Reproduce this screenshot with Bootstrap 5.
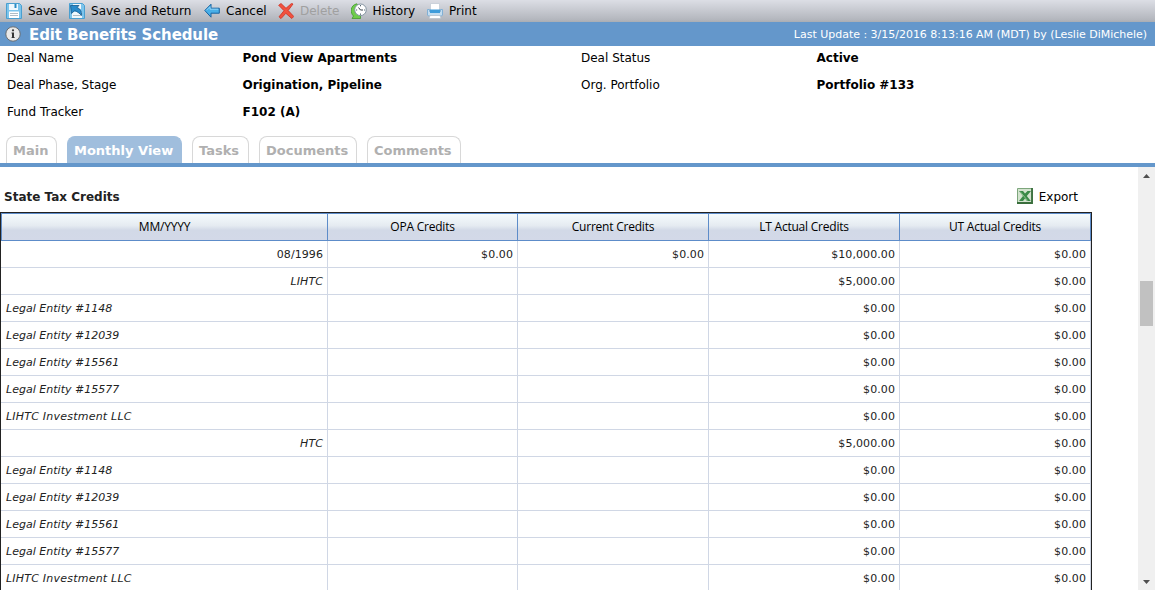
<!DOCTYPE html>
<html lang="en">
<head>
<meta charset="utf-8">
<title>Edit Benefits Schedule</title>
<link href="https://cdn.jsdelivr.net/npm/bootstrap@5.3.0/dist/css/bootstrap.min.css" rel="stylesheet">
<style>
body{font-family:Verdana,"DejaVu Sans",sans-serif;font-size:12px;line-height:16px;color:#000;height:590px;background:#fff}
.toolbar{height:22px;background:linear-gradient(#dcdee5,#b4b7be 88%,#a9adb3);padding-left:6px}
.tool{color:#000;font-size:12px;line-height:20px;height:21px;white-space:nowrap}
.tool svg{flex:none;margin-right:6px}
.tool.off{color:#a0a0a0}
.titlebar{height:24px;background:#6497cb;color:#fff;padding:0 8px 0 5px}
.titlebar h1{font-size:15px;line-height:24px;font-weight:700;margin:1px 0 0 8px;letter-spacing:-.1px}
.stamp{font-size:11px;letter-spacing:-.015px;padding-top:1px}
.facts{height:90px;padding-left:7px}
.facts>div{height:27px;line-height:24px;display:grid;grid-template-columns:235.5px 338.5px 235.5px 1fr}
.tabs{height:31px;border-bottom:4px solid #6497cb;padding-left:6px;gap:10px}
.tabs .tab{height:27px;border:1px solid #d8d8d8;border-bottom:0;border-radius:8px 8px 0 0;color:#b0b0b0;font-weight:700;font-size:13px;line-height:27px;padding-left:6px;text-decoration:none;white-space:nowrap}
.tabs .tab.active{background:#a0bedd;border-color:#a0bedd;color:#fff}
.pane{height:423px}
.sect{height:45px;padding:14px 60px 0 4px;width:1138px}
.grid{width:1092px;border:1px solid #222;border-bottom:0;table-layout:fixed;border-collapse:separate;border-spacing:0;color:#222;font-size:11px}
.grid th{height:28px;padding:0;text-align:center;font:12px/26px "Trebuchet MS","Open Sans",sans-serif;letter-spacing:-.22px;color:#000;background:linear-gradient(#f5fbfd,#e5ebf1 45%,#d2d9e7 62%,#d3d9e8);border:1px solid #5d8cc9;border-width:1px 1px 1px 0}
.grid th:first-child{border-left-width:1px}
.grid td{height:27px;padding:1px 4px 0;line-height:25px;letter-spacing:.08px;text-align:right;border:1px solid #d0d7e5;border-width:0 1px 1px 0}
.grid tr.sub td:first-child,.grid tr.leaf td:first-child{font-style:italic}
.grid tr.leaf td:first-child{text-align:left;padding-left:5px;letter-spacing:.02px}
.grid tr.wide td:first-child{letter-spacing:.22px}
.bar{width:17px;background:#f0f0f0;padding:6px 2px 3px}
.thumb{height:45px;margin-top:102px;background:#c1c1c1}
</style>
</head>
<body class="d-flex flex-column overflow-hidden">
<nav class="toolbar d-flex flex-shrink-0">
<a class="tool d-flex align-items-center text-decoration-none" style="width:63px"><svg width="16" height="16" viewBox="0 0 16 16"><path d="M.5.5h13l2 2v13H.5z" fill="#7cc4ec" stroke="#4a9fd0"/><path d="M3 1h9v6H3z" fill="#f0f8fd"/><path d="M8.500 1h2v4h-2z" fill="#288bc4"/><path d="M3 8.500h10V15H3z" fill="#fff"/><path d="M4 10.500h8M4 12.500h8" stroke="#b0bcc5"/></svg>Save</a>
<a class="tool d-flex align-items-center text-decoration-none" style="width:135px;letter-spacing:.06px"><svg width="16" height="16" viewBox="0 0 16 16"><path d="M.5.5h13l2 2v13H.5z" fill="#7cc4ec" stroke="#4a9fd0"/><path d="M4 1h8v5H4zM3 9h10v6H3z" fill="#f1f8fc"/><path d="M4 12.500h8" stroke="#b0bcc5"/><path d="M1.500 2.500H10L8 4.500c3 1 5 4 4.500 8C10.500 10 8.500 9 5.800 7.500L2.500 10.500z" fill="#2a8bcb" stroke="#17588c" stroke-width=".8"/></svg>Save and Return</a>
<a class="tool d-flex align-items-center text-decoration-none" style="width:74px"><svg width="16" height="16" viewBox="0 0 16 16"><path d="M.8 7.500 7 1.200v4h8.300v5H7v4z" fill="#48afe8" stroke="#1762a0"/><path d="M2.500 7.200 6 3.700v2.500h8.300" fill="none" stroke="#91d4f8"/></svg>Cancel</a>
<a class="tool off d-flex align-items-center text-decoration-none" style="width:72.500px"><svg width="16" height="16" viewBox="0 0 16 16"><path d="M.7 2.300 3 .5l5 4.800L13.500.4l1.500.6-4.800 6.500 5.600 6-2 2-6-5.200L3 15.600l-2-1.800L6 7.700z" fill="#f1523f" stroke="#cf2d20" stroke-width=".8"/></svg>Delete</a>
<a class="tool d-flex align-items-center text-decoration-none" style="width:76.500px"><svg width="16" height="16" viewBox="0 0 16 16"><path d="M6 .8C-1 2-1 10 2.500 13L1 15.500h8.500V9L7 11C5 9 5 5 8 3z" fill="#6fcd4c" stroke="#389324" stroke-width=".7"/><circle cx="9.500" cy="6.800" r="5.800" fill="#fff" stroke="#8494a2"/><path d="M7.500 4.500l2 2.500H12" stroke="#39434c" fill="none"/><path d="M9.500 2v1.300M9.500 10.500v1.300M5 7h1.200M13 7h1.200" stroke="#556573"/></svg>History</a>
<a class="tool d-flex align-items-center text-decoration-none"><svg width="16" height="16" viewBox="0 0 16 16"><path d="M3.500.5h9V8h-9z" fill="#fff" stroke="#c3ccd5" stroke-width=".8"/><path d="M.5 6.500h2v2h11v-2h2V12l-1 1h-13l-1-1z" fill="#c3ddf0" stroke="#79acd4" stroke-width=".9"/><path d="M3 6.500h10V10H3z" fill="#3e9cda"/><path d="M3 12.500h10l1 3H2z" fill="#fff" stroke="#b5bfc9" stroke-width=".7"/></svg>Print</a>
</nav>
<header class="titlebar d-flex align-items-center justify-content-between flex-shrink-0">
<div class="d-flex align-items-center"><svg width="16" height="16" viewBox="0 0 16 16"><circle cx="8" cy="8" r="7.200" fill="#e8e8e8" stroke="#666" stroke-width=".9"/><path d="M6.500 6.500H9V12H7V7.500h-.5zM6.500 11.200h3.300v.8H6.500z" fill="#333"/><circle cx="8" cy="4.300" r="1.100" fill="#333"/></svg><h1>Edit Benefits Schedule</h1></div>
<span class="stamp">Last Update : 3/15/2016 8:13:16 AM (MDT) by (Leslie DiMichele)</span>
</header>
<section class="facts flex-shrink-0">
<div><span>Deal Name</span><b>Pond View Apartments</b><span>Deal Status</span><b>Active</b></div>
<div><span>Deal Phase, Stage</span><b>Origination, Pipeline</b><span>Org. Portfolio</span><b>Portfolio #133</b></div>
<div><span>Fund Tracker</span><b>F102 (A)</b></div>
</section>
<nav class="tabs d-flex flex-shrink-0">
<a class="tab" style="width:51px">Main</a><a class="tab active" style="width:115px">Monthly View</a><a class="tab" style="width:57px">Tasks</a><a class="tab" style="width:98px">Documents</a><a class="tab" style="width:94px">Comments</a>
</nav>
<main class="pane d-flex overflow-hidden">
<div class="flex-grow-1">
<div class="sect d-flex justify-content-between align-items-center"><b style="color:#222;padding-top:1px">State Tax Credits</b><span class="d-flex align-items-center"><svg width="16" height="16" viewBox="0 0 16 16" style="margin:-1px 6px 0 0"><path d="M.5.5h15v15H.5z" fill="#d3e3cf" stroke="#7da67c"/><path d="M15 0v15H0" fill="none" stroke="#396e3c" stroke-width="1.800"/><path d="M2 3h4l2 2.500L10.500 3H14L9.800 8l4 5H10L8 10.500 6 13H2l4-5z" fill="#3a8a48"/><path d="M3 3.500l7.500 9" stroke="#8cc18e"/></svg>Export</span></div>
<table class="grid">
<colgroup><col style="width:327px"><col style="width:190px"><col style="width:191px"><col style="width:191px"><col style="width:191px"></colgroup>
<thead><tr><th>MM/YYYY</th><th>OPA Credits</th><th>Current Credits</th><th>LT Actual Credits</th><th>UT Actual Credits</th></tr></thead>
<tbody>
<tr><td>08/1996</td><td>$0.00</td><td>$0.00</td><td>$10,000.00</td><td>$0.00</td></tr>
<tr class="sub"><td>LIHTC</td><td></td><td></td><td>$5,000.00</td><td>$0.00</td></tr>
<tr class="leaf"><td>Legal Entity #1148</td><td></td><td></td><td>$0.00</td><td>$0.00</td></tr>
<tr class="leaf"><td>Legal Entity #12039</td><td></td><td></td><td>$0.00</td><td>$0.00</td></tr>
<tr class="leaf"><td>Legal Entity #15561</td><td></td><td></td><td>$0.00</td><td>$0.00</td></tr>
<tr class="leaf"><td>Legal Entity #15577</td><td></td><td></td><td>$0.00</td><td>$0.00</td></tr>
<tr class="leaf wide"><td>LIHTC Investment LLC</td><td></td><td></td><td>$0.00</td><td>$0.00</td></tr>
<tr class="sub"><td>HTC</td><td></td><td></td><td>$5,000.00</td><td>$0.00</td></tr>
<tr class="leaf"><td>Legal Entity #1148</td><td></td><td></td><td>$0.00</td><td>$0.00</td></tr>
<tr class="leaf"><td>Legal Entity #12039</td><td></td><td></td><td>$0.00</td><td>$0.00</td></tr>
<tr class="leaf"><td>Legal Entity #15561</td><td></td><td></td><td>$0.00</td><td>$0.00</td></tr>
<tr class="leaf"><td>Legal Entity #15577</td><td></td><td></td><td>$0.00</td><td>$0.00</td></tr>
<tr class="leaf wide"><td>LIHTC Investment LLC</td><td></td><td></td><td>$0.00</td><td>$0.00</td></tr>
</tbody>
</table>
</div>
<div class="bar d-flex flex-column flex-shrink-0">
<svg width="13" height="6" viewBox="0 0 13 6"><path d="M3 5 6.500 1 10 5z" fill="#505050"/></svg>
<div class="thumb"></div>
<svg class="mt-auto" width="13" height="8" viewBox="0 0 13 8"><path d="M3 1h7L6.500 5z" fill="#505050"/></svg>
</div>
</main>
<script src="https://cdn.jsdelivr.net/npm/bootstrap@5.3.0/dist/js/bootstrap.bundle.min.js"></script>
</body>
</html>
